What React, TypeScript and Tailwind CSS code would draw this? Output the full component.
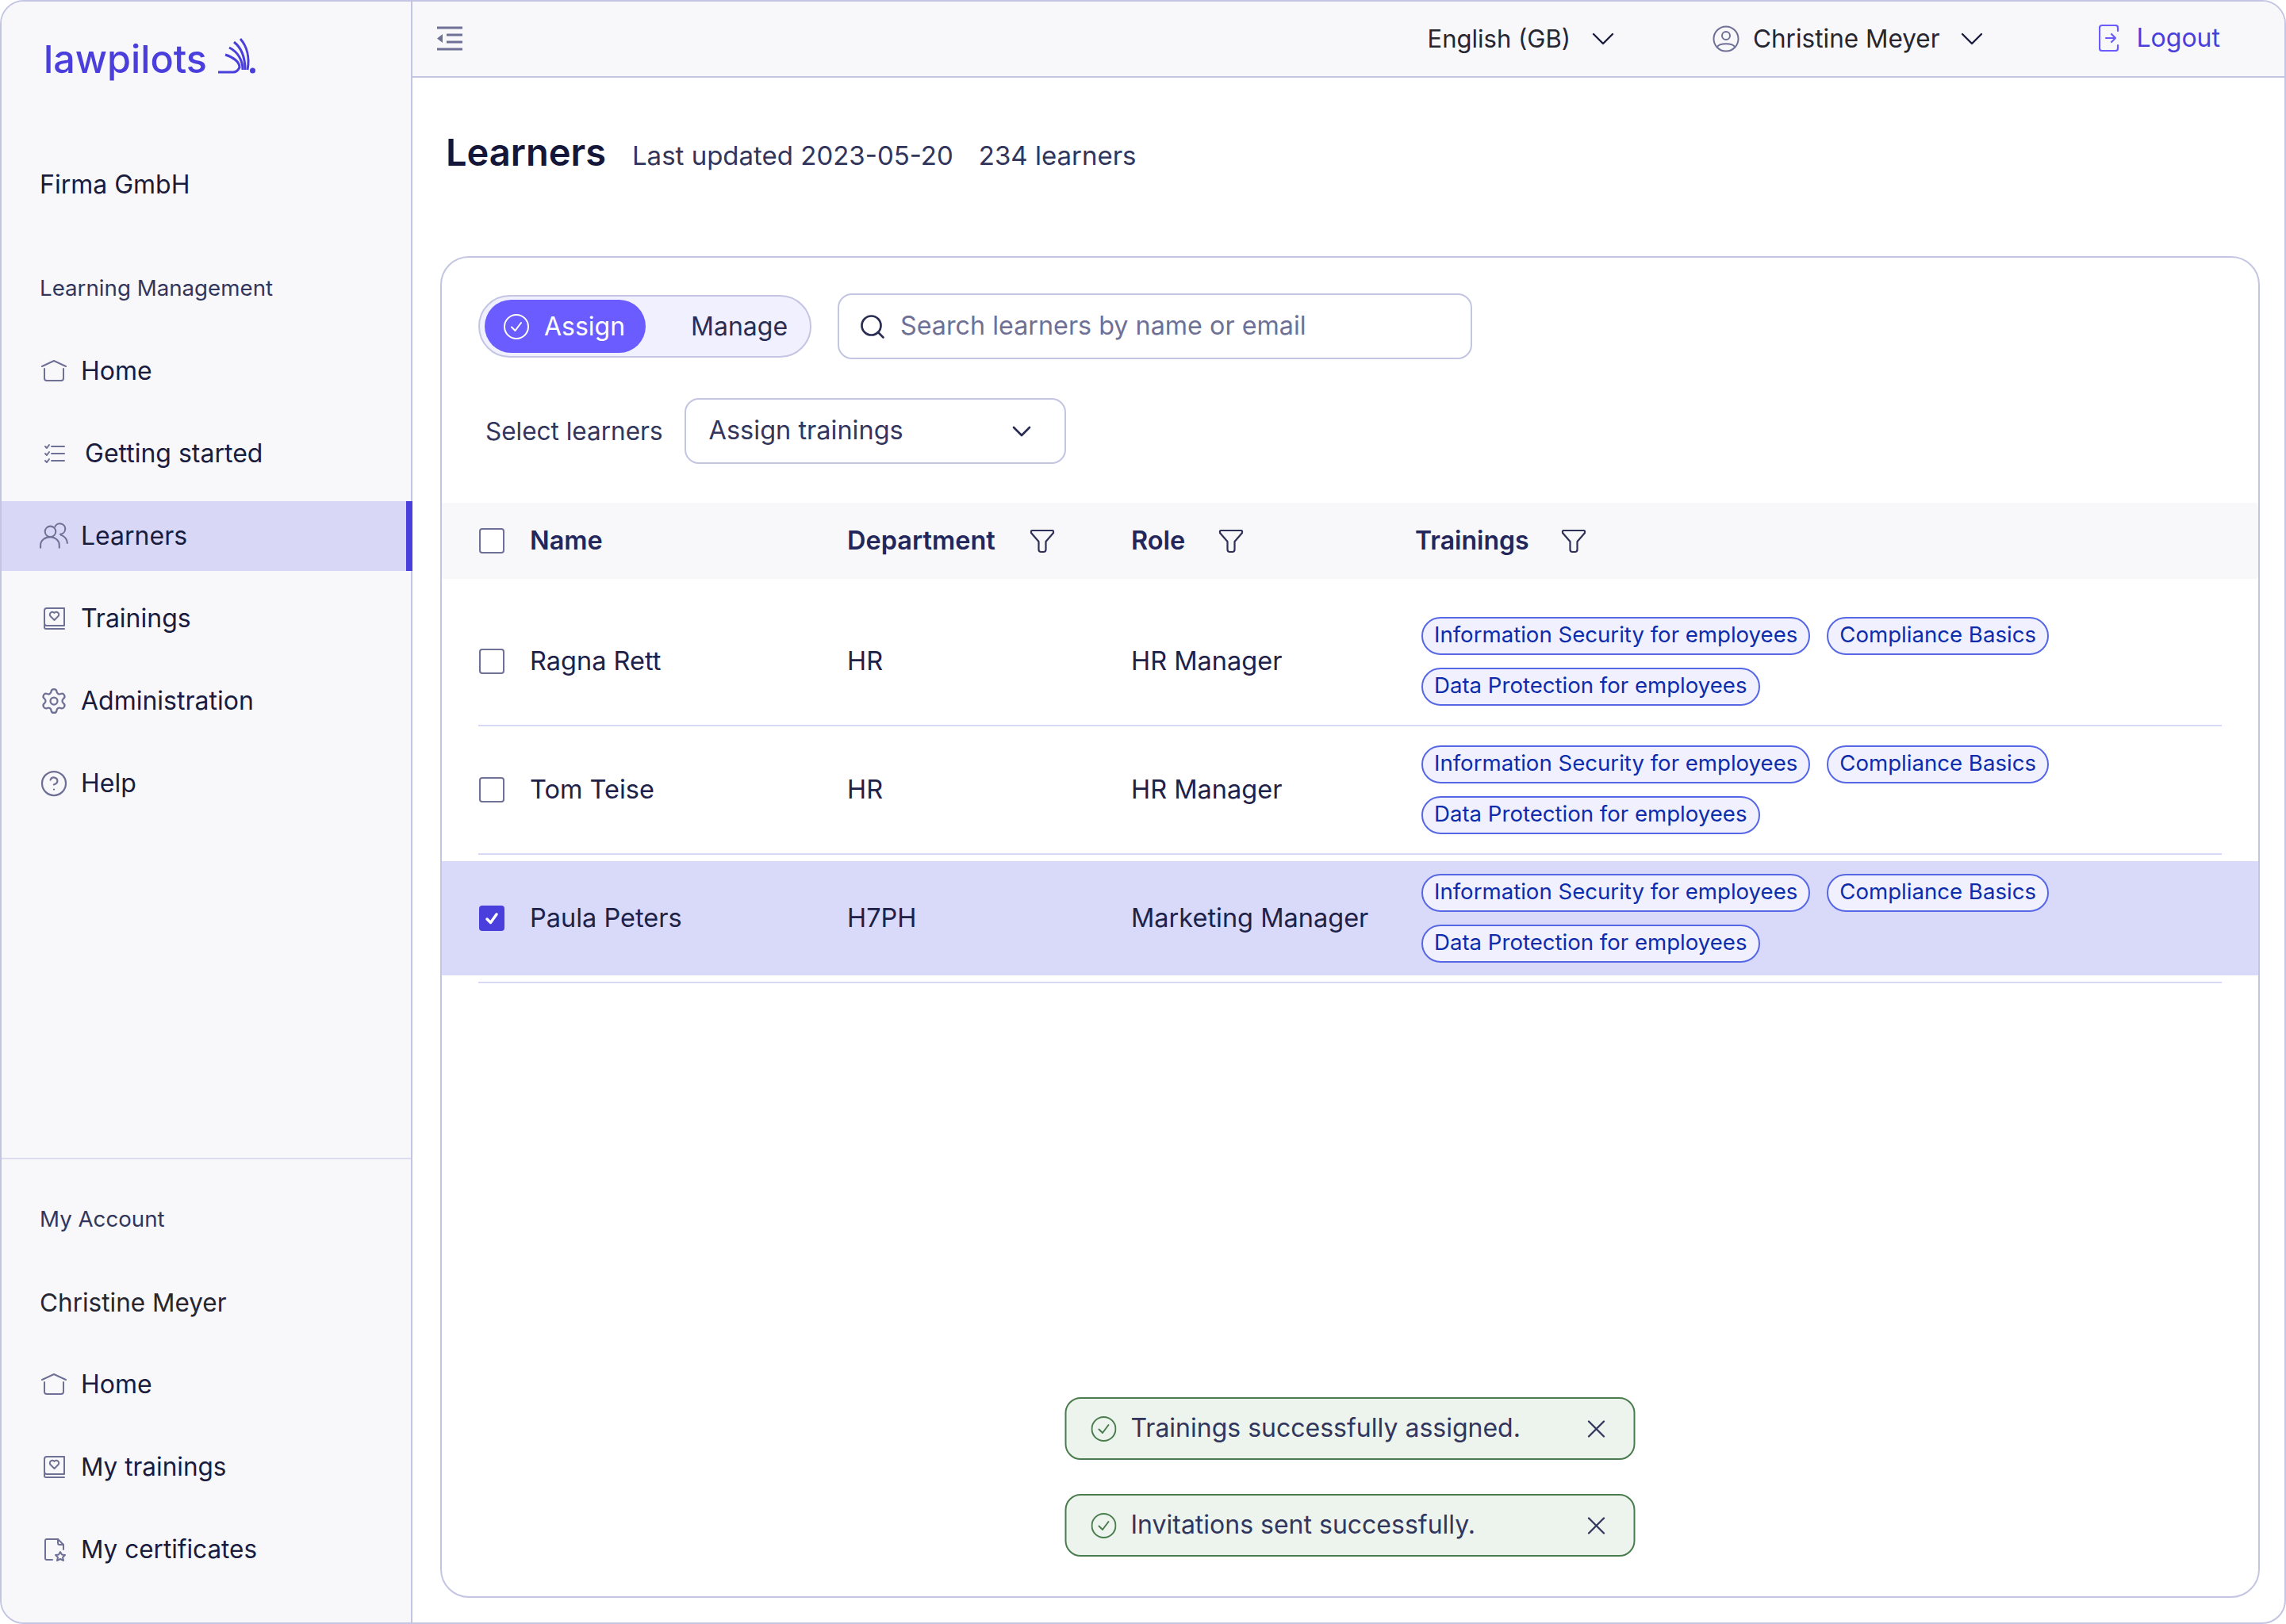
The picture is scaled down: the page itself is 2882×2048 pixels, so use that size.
import React from "react";
import { Search, Settings, CircleHelp, ChevronDown, X } from "lucide-react";

const NAV = "#6f7095";

function Svg({ children, size = 32, color = NAV, sw = 2 }: { children: React.ReactNode; size?: number; color?: string; sw?: number }) {
  return (
    <svg width={size} height={size} viewBox="0 0 32 32" fill="none" stroke={color} strokeWidth={sw} strokeLinecap="round" strokeLinejoin="round" className="shrink-0">
      {children}
    </svg>
  );
}

const HomeIcon = () => (
  <Svg>
    <path d="M1 10 L16 3 L31 10" />
    <path d="M4 13 V25 a3 3 0 0 0 3 3 H25 a3 3 0 0 0 3 -3 V13" />
  </Svg>
);
const ListIcon = () => (
  <Svg>
    <path d="M13 7 H29 M13 16 H29 M13 25 H29" />
    <path d="M5 7 l2 2 l3 -4 M5 16 l2 2 l3 -4 M5 25 l2 2 l3 -4" />
  </Svg>
);
const UsersIcon = () => (
  <Svg size={36} sw={1.800}>
    <circle cx="12" cy="11" r="6" />
    <path d="M1 29 V26 C1 21 6 17 12 17 C17 17 22 21 22 26 V29" />
    <path d="M17 6 A6 6 0 1 1 23 14" />
    <path d="M24 15 C28 16 31 20 31 24" />
  </Svg>
);
const BookIcon = () => (
  <Svg>
    <path d="M29 25 H7 a3 3 0 0 1 -3 -3 V6 a3 3 0 0 1 3 -3 H29 V25 M4 24 v3 a2 2 0 0 0 2 2 H29" />
    <path d="M16.500 18 L11.500 13 a3 3 0 0 1 5 -4 a3 3 0 0 1 5 4 Z" />
  </Svg>
);
const CertIcon = () => (
  <Svg>
    <path d="M14 29 H7 a2 2 0 0 1 -2 -2 V5 a2 2 0 0 1 2 -2 H21 L28 10 V16" />
    <path d="M21 3 V8 a2 2 0 0 0 2 2 H28" />
    <path d="M24 19 l2 3.500 l4 .5 l-3 3 l1 4 l-4 -2 l-4 2 l1 -4 l-3 -3 l4 -.5 Z" />
  </Svg>
);
const FilterIcon = () => (
  <Svg color="#2f3158" sw={2.200}>
    <path d="M3 3 H29 a1 1 0 0 1 1 1 V6 L20.500 17 V27 a3 3 0 0 1 -3 3 H14.500 a3 3 0 0 1 -3 -3 V17 L2 6 V4 a1 1 0 0 1 1 -1 Z" />
  </Svg>
);
const CheckCircle = ({ color }: { color: string }) => (
  <Svg color={color} sw={2}>
    <circle cx="16" cy="16" r="15" />
    <path d="M10 16.500 L14.500 21 L22 11" />
  </Svg>
);
const Chevron = () => (
  <svg width="28" height="16" viewBox="0 0 28 16" fill="none" stroke="#1a1c3d" strokeWidth="2.400" strokeLinecap="round" strokeLinejoin="round" className="shrink-0">
    <path d="M2 2 L14 14 L26 2" />
  </svg>
);

function Logo() {
  return (
    <div className="flex items-end gap-[14px] h-[54px]">
      <span className="text-[48.500px] leading-[54px] font-medium text-[#4a3fdc]">lawpilots</span>
      <svg width="48" height="50" viewBox="13 10 48 50" fill="none" stroke="#4a3fdc" strokeWidth="3" strokeLinecap="butt" className="mb-[6px]">
        <path d="M41 13 C49 22 53 36 50 52" />
        <path d="M33 17 C42 24 47 36 47 52" />
        <path d="M27 24 C37 29 44 39 44 52" />
        <path d="M22 33 C32 36 40 42 40 49 C38 53 35 55 32 55 H13" />
        <circle cx="56.500" cy="53" r="3.500" fill="#4a3fdc" stroke="none" />
      </svg>
    </div>
  );
}

function NavItem({ icon, label, active, wide, small }: { icon: React.ReactNode; label: string; active?: boolean; wide?: boolean; small?: boolean }) {
  return (
    <div className={`h-[88px] flex items-center pl-[50px] text-[#1a1c3d] relative ${small ? "text-[31.500px]" : "text-[32px]"} ${active ? "bg-[#d8d8f6]" : ""}`}>
      <span className="w-[32px] flex justify-center shrink-0">{icon}</span>
      <span className={wide ? "ml-[23px]" : "ml-[18px]"}>{label}</span>
      {active && <div className="absolute right-[-2px] top-0 bottom-0 w-[8px] bg-[#4a3fdc]" />}
    </div>
  );
}

function Chip({ label }: { label: string }) {
  return (
    <span className="h-[48px] px-[14px] pb-[2px] flex items-center rounded-full border-2 border-[#5667e6] bg-[#f1f0ff] text-[#0c2cab] text-[27.600px] whitespace-nowrap">
      {label}
    </span>
  );
}

function Checkbox({ checked }: { checked?: boolean }) {
  return checked ? (
    <span className="ml-[1px] w-[32px] h-[32px] rounded-[4px] bg-[#4a3fdc] flex items-center justify-center shrink-0">
      <svg width="22" height="22" viewBox="0 0 22 22" fill="none" stroke="#fff" strokeWidth="3.500" strokeLinecap="round" strokeLinejoin="round">
        <path d="M5 12 L9.500 16.500 L17 6" />
      </svg>
    </span>
  ) : (
    <span className="ml-[1px] w-[32px] h-[32px] rounded-[4px] border-2 border-[#6f7095] bg-white shrink-0" />
  );
}

function Row({ name, dept, role, checked }: { name: string; dept: string; role: string; checked?: boolean }) {
  return (
    <div>
      <div className="py-[8px]">
        <div className={`grid grid-cols-[465px_358px_359px_1fr] items-center pl-[46px] py-[16px] text-[32.500px] text-[#1e2148] ${checked ? "bg-[#d9d9fa]" : ""}`}>
          <div className="flex items-center gap-[32px]">
            <Checkbox checked={checked} />
            <span>{name}</span>
          </div>
          <div>{dept}</div>
          <div>{role}</div>
          <div className="flex flex-wrap gap-x-[21px] gap-y-[16px] pl-[7px] pr-[48px]">
            <Chip label="Information Security for employees" />
            <Chip label="Compliance Basics" />
            <Chip label="Data Protection for employees" />
          </div>
        </div>
      </div>
      <div className="h-[2px] ml-[46px] mr-[46px] bg-[#d8d9f6]" />
    </div>
  );
}

function Toast({ label }: { label: string }) {
  return (
    <div className="h-[79px] w-[719px] rounded-[20px] border-2 border-[#4a7c4e] bg-[#edf4ee] flex items-center pl-[31px] pr-[28px]">
      <CheckCircle color="#4a7c4e" />
      <span className="ml-[18px] pb-[1px] text-[32px] text-[#33365c] flex-1">{label}</span>
      <X size={38} color="#33365c" strokeWidth={1.500} />
    </div>
  );
}

export default function App() {
  return (
    <div className="w-[2882px] h-[2048px] flex border-2 border-[#c3c5e2] rounded-[30px] overflow-hidden bg-white" style={{ fontFamily: '"Inter", sans-serif' }}>
      <aside className="w-[518px] shrink-0 h-full bg-[#f8f8fb] border-r-2 border-[#c3c5e2] flex flex-col">
        <div className="pl-[53px] pt-[46px]">
          <Logo />
        </div>
        <div className="pl-[48px] mt-[111px] text-[32px] leading-[40px] text-[#1a1c3d]">Firma GmbH</div>
        <div className="pl-[48px] mt-[90px] text-[27.700px] leading-[40px] text-[#33365c]">Learning Management</div>
        <nav className="mt-[41px] flex flex-col gap-[16px]">
          <NavItem icon={<HomeIcon />} label="Home" />
          <NavItem icon={<ListIcon />} label="Getting started" wide />
          <NavItem icon={<UsersIcon />} label="Learners" active />
          <NavItem icon={<BookIcon />} label="Trainings" />
          <NavItem icon={<Settings size={36} color={NAV} strokeWidth={1.500} className="shrink-0" />} label="Administration" />
          <NavItem icon={<CircleHelp size={36} color={NAV} strokeWidth={1.500} className="shrink-0" />} label="Help" />
        </nav>
        <div className="mt-auto border-t-2 border-[#dcddf0] pb-[48px]">
          <div className="pl-[48px] mt-[55px] text-[27.700px] leading-[40px] text-[#33365c]">My Account</div>
          <div className="pl-[48px] mt-[66px] text-[31.500px] leading-[40px] text-[#262630]">Christine Meyer</div>
          <div className="mt-[39px] flex flex-col gap-[16px]">
            <NavItem icon={<HomeIcon />} label="Home" />
            <NavItem icon={<BookIcon />} label="My trainings" small />
            <NavItem icon={<CertIcon />} label="My certificates" small />
          </div>
        </div>
      </aside>

      <div className="flex-1 min-w-0 h-full flex flex-col">
        <header className="h-[96px] shrink-0 bg-[#f8f8fb] border-b-2 border-[#c3c5e2] flex items-center pl-[30px]">
          <svg width="34" height="32" viewBox="0 0 34 32" fill="none" stroke={NAV} strokeWidth="3">
            <path d="M1 2 H33 M13 11 H33 M13 20 H33 M1 29 H33" />
            <path d="M8 10 V21 L1 15.500 Z" fill={NAV} stroke="none" />
          </svg>
          <div className="ml-auto flex items-center text-[#262630] text-[31px]">
            <span>English (GB)</span>
            <span className="ml-[27px]"><Chevron /></span>
            <span className="ml-[124px] flex items-center text-[31.500px]">
              <svg width="34" height="34" viewBox="0 0 34 34" fill="none" stroke={NAV} strokeWidth="2">
                <circle cx="17" cy="17" r="15.500" />
                <circle cx="17" cy="13" r="5" />
                <path d="M6 27 C9 22 25 22 28 27" />
              </svg>
              <span className="ml-[17px]">Christine Meyer</span>
            </span>
            <span className="ml-[26px]"><Chevron /></span>
            <span className="ml-[146px] mr-[81px] -mt-[2px] flex items-center text-[32px] text-[#4a3fdc]">
              <svg width="26" height="34" viewBox="0 0 26 34" fill="none" stroke="#6b5cff" strokeWidth="2.200" strokeLinecap="round" strokeLinejoin="round">
                <path d="M24 8 V4 a3 3 0 0 0 -3 -3 H4 a3 3 0 0 0 -3 3 V30 a3 3 0 0 0 3 3 H21 a3 3 0 0 0 3 -3 V26" />
                <path d="M9 17 H21 M16 12 L21 17 L16 22" />
              </svg>
              <span className="ml-[22px]">Logout</span>
            </span>
          </div>
        </header>

        <main className="flex-1 min-h-0 flex flex-col pl-[35px] pr-[31px] pb-[31px]">
          <div className="h-[225px] pb-[36px] pl-[7px] shrink-0 flex items-center">
            <h1 className="text-[47px] font-semibold text-[#15173a]">Learners</h1>
            <span className="ml-[33px] mt-[8px] text-[33px] text-[#33365c]">Last updated 2023-05-20</span>
            <span className="ml-[32px] mt-[8px] text-[33px] text-[#33365c]">234 learners</span>
          </div>

          <section className="relative flex-1 min-h-0 border-2 border-[#c3c5e2] rounded-[36px] bg-white flex flex-col">
            <div className="pl-[46px] pt-[45px] flex flex-col gap-[49px]">
              <div className="flex items-center gap-[33px]">
                <div className="h-[79px] w-[420px] rounded-full border-2 border-[#c3c5e2] bg-[#f1f0ff] flex items-center pl-[6px] text-[32px]">
                  <span className="h-[67px] w-[203px] rounded-full bg-[#6b5cff] text-white flex items-center pl-[24px] gap-[19px]">
                    <CheckCircle color="#ffffff" />
                    <span>Assign</span>
                  </span>
                  <span className="ml-[57px] text-[#2a2d52]">Manage</span>
                </div>
                <div className="h-[83px] w-[800px] rounded-[18px] border-2 border-[#c3c5e2] bg-white flex items-center pl-[24px] text-[32.300px] text-[#6f7095]">
                  <Search size={36} color="#2a2d52" strokeWidth={1.800} />
                  <span className="ml-[17px]">Search learners by name or email</span>
                </div>
              </div>
              <div className="flex items-center text-[#33365c] pl-[9px]">
                <span className="text-[31.500px]">Select learners</span>
                <div className="ml-[27px] h-[83px] w-[481px] rounded-[18px] border-2 border-[#c3c5e2] flex items-center pl-[29px] text-[32.500px]">
                  <span>Assign trainings</span>
                  <ChevronDown size={40} strokeWidth={1.600} color="#2a2d52" className="ml-auto mr-[34px]" />
                </div>
              </div>
            </div>

            <div className="mt-[49px] h-[96px] bg-[#f8f8fb] grid grid-cols-[465px_358px_359px_1fr] items-center pl-[46px] text-[32.500px] font-semibold text-[#22265a]">
              <div className="flex items-center gap-[32px]">
                <Checkbox />
                <span>Name</span>
              </div>
              <div className="flex items-center gap-[43px]">
                <span>Department</span>
                <FilterIcon />
              </div>
              <div className="flex items-center gap-[42px]">
                <span>Role</span>
                <FilterIcon />
              </div>
              <div className="-ml-[1px] flex items-center gap-[40px] text-[32px]">
                <span>Trainings</span>
                <FilterIcon />
              </div>
            </div>

            <div className="mt-[24px]">
              <Row name="Ragna Rett" dept="HR" role="HR Manager" />
              <Row name="Tom Teise" dept="HR" role="HR Manager" />
              <Row name="Paula Peters" dept="H7PH" role="Marketing Manager" checked />
            </div>

            <div className="absolute bottom-[50px] left-1/2 -translate-x-1/2 flex flex-col gap-[43px]">
              <Toast label="Trainings successfully assigned." />
              <Toast label="Invitations sent successfully." />
            </div>
          </section>
        </main>
      </div>
    </div>
  );
}
